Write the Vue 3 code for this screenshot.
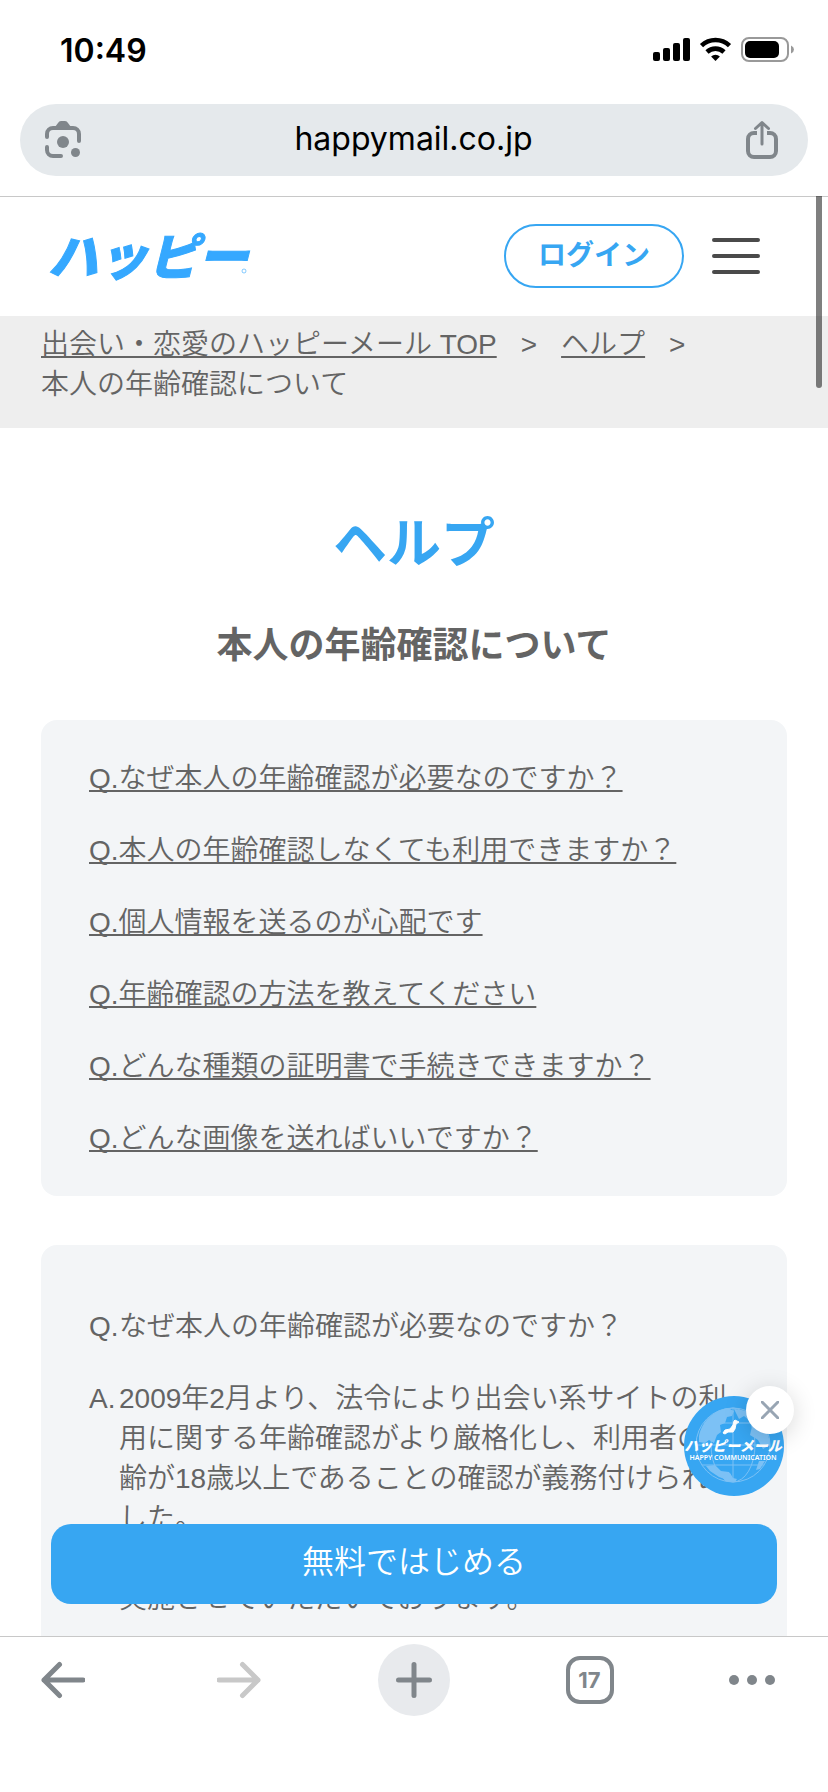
<script setup>
const questions = [
  'Q.なぜ本人の年齢確認が必要なのですか？',
  'Q.本人の年齢確認しなくても利用できますか？',
  'Q.個人情報を送るのが心配です',
  'Q.年齢確認の方法を教えてください',
  'Q.どんな種類の証明書で手続きできますか？',
  'Q.どんな画像を送ればいいですか？',
]
</script>

<template>
  <div class="screen">
    <div class="status">
      <span class="time">10:49</span>
      <svg class="status-icons" width="142" height="26" viewBox="0 0 142 26" aria-hidden="true">
        <rect x="0" y="15" width="7" height="9" rx="2" />
        <rect x="10" y="11" width="7" height="13" rx="2" />
        <rect x="20" y="6" width="7" height="18" rx="2" />
        <rect x="30" y="1" width="7" height="23" rx="2" />
        <g fill="none" stroke="#000" stroke-width="4.6">
          <path d="M48.5 8.6a20.5 20.5 0 0 1 28 0" />
          <path d="M54 15a12.4 12.4 0 0 1 17 0" />
        </g>
        <path d="M62.5 24l-4.4-4.6a6.6 6.6 0 0 1 8.8 0z" />
        <rect x="89" y="1" width="46" height="23" rx="7" fill="none" stroke="#999" stroke-width="2" />
        <rect x="92" y="4" width="34" height="17" rx="5" />
        <path d="M138 8.5q3 1.500 3 4t-3 4z" fill="#999" />
      </svg>
    </div>

    <div class="address">
      <button class="plain" aria-label="Lens">
        <svg width="36" height="38" viewBox="0 0 36 38">
          <g fill="none" stroke="#80868b" stroke-width="4" stroke-linecap="round">
            <path d="M2 16v-3a6 6 0 0 1 6-6h20a6 6 0 0 1 6 6v7" />
            <path d="M2 26v3a6 6 0 0 0 6 6h8" />
          </g>
          <g fill="#80868b">
            <path d="M10 6l3-4q1-2 3-2h4q2 0 3 2l3 4z" />
            <circle cx="18" cy="21" r="6" />
            <circle cx="30.500" cy="31.500" r="4.500" />
          </g>
        </svg>
      </button>
      <span class="url">happymail.co.jp</span>
      <button class="plain" aria-label="共有">
        <svg width="32" height="40" viewBox="0 0 32 40" fill="none" stroke="#80868b">
          <path d="M11 13H8a6 6 0 0 0-6 6v12a6 6 0 0 0 6 6h16a6 6 0 0 0 6-6V19a6 6 0 0 0-6-6h-3" stroke-width="4" />
          <path d="M16 24V3M9.500 8.500L16 2.500l6.500 6" stroke-width="3" stroke-linecap="round" stroke-linejoin="round" />
        </svg>
      </button>
    </div>

    <div class="viewport">
      <div class="page">
        <header class="site-header">
          <a class="logo" href="#" aria-label="ハッピー">
            <svg width="210" height="80" viewBox="0 0 210 80">
              <text class="mark" x="0" y="59">ハッピー</text>
              <circle cx="196" cy="55" r="2" fill="none" stroke="#35a8ff" stroke-opacity="0.6" />
            </svg>
          </a>
          <button class="login">ログイン</button>
          <button class="plain" aria-label="メニュー">
            <svg width="48" height="36" viewBox="0 0 48 36" stroke="#4a4a4a" stroke-width="4" stroke-linecap="round">
              <path d="M2 2h44M2 18h44M2 34h44" />
            </svg>
          </button>
        </header>

        <nav class="crumbs">
          <a href="#">出会い・恋愛のハッピーメール TOP</a><span class="sep">&gt;</span><a href="#">ヘルプ</a><span class="sep">&gt;</span>
          <div>本人の年齢確認について</div>
        </nav>

        <main>
          <h1>ヘルプ</h1>
          <h2>本人の年齢確認について</h2>
          <ul class="card list">
            <li v-for="q in questions" :key="q"><a href="#">{{ q }}</a></li>
          </ul>
          <section class="card answer">
            <div class="row"><span>Q.</span><p>なぜ本人の年齢確認が必要なのですか？</p></div>
            <div class="row">
              <span>A.</span>
              <div>
                <p>2009年2月より、法令により出会い系サイトの利用に関する年齢確認がより厳格化し、利用者の年齢が18歳以上であることの確認が義務付けられました。</p>
                <p class="next">実施させていただいております。</p>
              </div>
            </div>
          </section>
        </main>
      </div>

      <div class="scroll-thumb"></div>
      <a class="cta" href="#">無料ではじめる</a>
      <div class="floating">
        <a href="#" aria-label="ハッピーメール">
          <svg width="100" height="100" viewBox="0 0 100 100">
            <circle cx="50" cy="50" r="50" fill="#37a6f2" />
            <g fill="#7cc1f5">
              <path d="M15 40C18 25 30 14 44 12l6 3-2 5-5 1-2 6-5 2 1 7-4 3-3 8-5-3-4 3-6-1z" />
              <path d="M50 13q12 0 20 7l-4 5-6-5-5 3z" />
              <path d="M69 26l8 0q8 10 9 23l-7 4-5-9-8-5z" />
              <path d="M22 70l9-1 6 6 8 1 3 5-2 4-11-4-9-6z" />
              <path d="M38 80l8-3 3 5 4 1-2 3-10-1z" />
              <path d="M75 65l6 0-5 8-4 1z" />
            </g>
            <g fill="none" stroke="#7cc1f5" stroke-width="1">
              <circle cx="49" cy="49" r="37" />
              <path d="M49 12v74M12 49h74M20 27h58M18 69h62" />
              <ellipse cx="49" cy="49" rx="22" ry="37" />
            </g>
            <path d="M51 24l4 2-3 2-1 5-2 3-5 0-3 2-2-1 2-3 5-1 3-4 1-4z" fill="#fff" stroke="#fff" stroke-width="1" />
            <text class="badge-name" x="49" y="55">ハッピーメール</text>
            <text class="badge-sub" x="49" y="64">HAPPY COMMUNICATION</text>
          </svg>
        </a>
        <button class="close" aria-label="閉じる">
          <svg width="18" height="18" viewBox="0 0 18 18" stroke="#98a5b3" stroke-width="3" stroke-linecap="round">
            <path d="M1 1l16 16M17 1L1 17" />
          </svg>
        </button>
      </div>
    </div>

    <nav class="toolbar">
      <button aria-label="戻る">
        <svg width="44" height="38" viewBox="0 0 44 38" fill="none" stroke="#80868b" stroke-width="5" stroke-linecap="round" stroke-linejoin="round">
          <path d="M42 19H3M18.500 3.500L3 19l15.500 15.500" />
        </svg>
      </button>
      <button aria-label="進む">
        <svg width="44" height="38" viewBox="0 0 44 38" fill="none" stroke="#c8c8c8" stroke-width="5" stroke-linecap="round" stroke-linejoin="round">
          <path d="M2 19h39M25.500 3.500L41 19 25.500 34.500" />
        </svg>
      </button>
      <button class="new-tab" aria-label="新しいタブ">
        <svg width="36" height="36" viewBox="0 0 36 36" stroke="#80868b" stroke-width="5" stroke-linecap="round">
          <path d="M18 2.500v31M2.500 18h31" />
        </svg>
      </button>
      <button aria-label="タブ"><span class="tabs">17</span></button>
      <button class="more" aria-label="その他">
        <svg width="46" height="10" viewBox="0 0 46 10" fill="#80868b">
          <circle cx="5" cy="5" r="5" /><circle cx="23" cy="5" r="5" /><circle cx="41" cy="5" r="5" />
        </svg>
      </button>
    </nav>
  </div>
</template>

<style>
body { margin: 0; background: #fff; }
</style>

<style scoped>
.screen {
  height: 100vh;
  display: flex;
  flex-direction: column;
  overflow: hidden;
  background: #fff;
  color: #646464;
  font-family: "Liberation Sans", "Noto Sans CJK JP", sans-serif;
  font-size: 28px;
  font-weight: 350;
  line-height: 40px;
}
a { color: inherit; }
svg { display: block; }
button { font: inherit; cursor: pointer; padding: 0; border: 0; background: none; color: inherit; }
.status {
  display: flex;
  justify-content: space-between;
  align-items: center;
  height: 100px;
  padding: 0 33px 4px 60px;
  margin-bottom: 4px;
  box-sizing: border-box;
  flex: none;
}
.time { font: 600 32px/40px Inter, sans-serif; color: #000; padding-top: 6px; }
.status-icons { margin-top: 4px; }
.address {
  display: flex;
  align-items: center;
  justify-content: space-between;
  flex: none;
  height: 72px;
  margin: 0 20px 20px;
  padding: 0 30px 0 25px;
  box-sizing: border-box;
  border-radius: 36px;
  background: #e5e9ec;
}
.url { padding-bottom: 2px; font: 400 32px/40px Inter, sans-serif; color: #000; }
.viewport { position: relative; flex: 1; min-height: 0; border-top: 1px solid #c8c8c8; }
.page { height: 100%; overflow-y: auto; scrollbar-width: none; }
.site-header {
  display: flex;
  align-items: center;
  height: 119px;
  padding: 0 68px 2px 48px;
  box-sizing: border-box;
}
.logo { margin-right: auto; }
.mark {
  font: italic 900 50px "Noto Sans CJK JP", sans-serif;
  fill: #35a8ff;
  stroke: #35a8ff;
  stroke-width: 1px;
}
.login {
  width: 180px;
  height: 64px;
  margin-right: 28px;
  border: 2px solid #37a6f2;
  border-radius: 32px;
  color: #37a6f2;
  font-weight: 700;
}
.crumbs { padding: 9px 41px 23px; background: #eee; }
.crumbs a, .list a {
  text-decoration: underline;
  text-decoration-thickness: 2px;
  text-underline-offset: 2px;
  text-decoration-skip-ink: none;
}
.sep { margin: 0 24px; }
main { padding: 80px 41px 0; }
h1, h2 { margin: 0; text-align: center; font-weight: 700; }
h1 { color: #37a6f2; font-size: 54px; line-height: 72px; }
h2 { margin: 42px 0 50px; font-size: 36px; line-height: 48px; }
.card { padding: 0 48px; border-radius: 16px; background: #f3f5f7; }
.list { display: grid; gap: 32px; margin: 0 0 49px; padding-top: 39px; padding-bottom: 37px; list-style: none; }
.answer { display: grid; gap: 32px; padding-top: 62px; padding-bottom: 60px; }
.row { display: grid; grid-template-columns: 30px 1fr; }
p { margin: 0; }
.next { margin-top: 40px; }
.scroll-thumb {
  position: absolute;
  top: -1px;
  right: 6px;
  width: 6px;
  height: 192px;
  border-radius: 0 0 3px 3px;
  background: rgba(0, 0, 0, 0.5);
}
.cta {
  position: absolute;
  left: 51px;
  right: 51px;
  bottom: 32px;
  height: 80px;
  border-radius: 20px;
  background: #37a6f2;
  color: #fff;
  font-size: 32px;
  line-height: 76px;
  text-align: center;
  text-decoration: none;
}
.floating { position: absolute; right: 44px; bottom: 140px; }
.floating a { display: block; }
.close {
  position: absolute;
  top: -10px;
  right: -10px;
  width: 48px;
  height: 48px;
  display: grid;
  place-items: center;
  border-radius: 50%;
  background: #fff;
  box-shadow: 0 4px 24px rgba(0, 0, 0, 0.16);
}
.badge-name {
  font: italic 900 14px "Noto Sans CJK JP", sans-serif;
  fill: #fff;
  text-anchor: middle;
}
.badge-sub { font: 600 7px "Noto Sans", sans-serif; fill: #fff; text-anchor: middle; }
.toolbar {
  display: flex;
  justify-content: space-between;
  align-items: flex-start;
  flex: none;
  height: 156px;
  padding: 7px 27px 0;
  box-sizing: border-box;
  border-top: 1px solid #c8c8c8;
}
.toolbar button { display: flex; align-items: center; justify-content: center; width: 72px; height: 72px; }
.toolbar .new-tab { border-radius: 50%; background: #e8eaed; }
.toolbar .more { justify-content: flex-start; }
.tabs {
  width: 48px;
  height: 48px;
  box-sizing: border-box;
  border: 4px solid #80868b;
  border-radius: 14px;
  color: #80868b;
  font: 700 22px/40px Inter, sans-serif;
}
</style>
